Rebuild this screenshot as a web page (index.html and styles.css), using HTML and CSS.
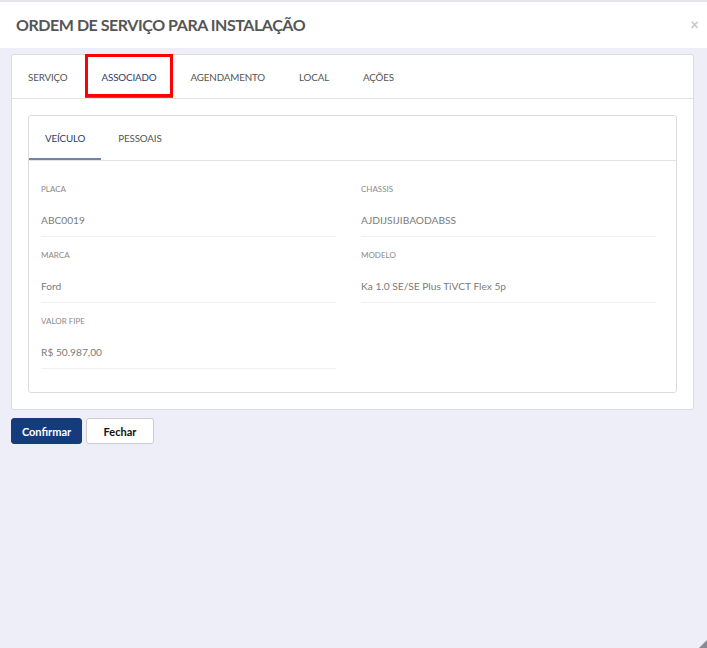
FILE: index.html
```html
<!DOCTYPE html>
<html lang="pt-BR">
<head>
  <meta charset="UTF-8">
  <meta name="viewport" content="width=device-width, initial-scale=1.0">
  <link rel="stylesheet" href="styles.css">
  <title>Ordem de Serviço</title>
</head>
<body>
  <header class="modal-header">
    <h1>ORDEM DE SERVIÇO PARA INSTALAÇÃO</h1>
    <span class="close">&times;</span>
  </header>

  <main class="modal-body">
    <div class="card">
      <div class="tabs">
        <a href="#servico" class="tab first">SERVIÇO</a>
        <a href="#associado" class="tab active marked">ASSOCIADO</a>
        <a href="#agendamento" class="tab">AGENDAMENTO</a>
        <a href="#local" class="tab">LOCAL</a>
        <a href="#acoes" class="tab">AÇÕES</a>
      </div>

      <div class="card-body">
        <div class="inner-card">
          <div class="tabs inner">
            <a href="#veiculo" class="tab first active">VEÍCULO</a>
            <a href="#pessoais" class="tab">PESSOAIS</a>
          </div>

          <div class="fields">
            <div class="field">
              <label>PLACA</label>
              <div class="value">ABC0019</div>
            </div>
            <div class="field">
              <label>CHASSIS</label>
              <div class="value">AJDIJSIJIBAODABSS</div>
            </div>
            <div class="field">
              <label>MARCA</label>
              <div class="value">Ford</div>
            </div>
            <div class="field">
              <label>MODELO</label>
              <div class="value">Ka 1.0 SE/SE Plus TiVCT Flex 5p</div>
            </div>
            <div class="field">
              <label>VALOR FIPE</label>
              <div class="value">R$ 50.987,00</div>
            </div>
          </div>
        </div>
      </div>
    </div>

    <div class="actions">
      <button class="btn primary">Confirmar</button>
      <button class="btn">Fechar</button>
    </div>
  </main>

  <svg class="resize" width="8" height="8" viewBox="0 0 8 8">
    <path d="M8 0 L8 8 L0 8 Z" fill="#8a8a95"/>
  </svg>
</body>
</html>
```

FILE: styles.css
```css
* {
  margin: 0;
  padding: 0;
  box-sizing: border-box;
  text-decoration: none;
}

html, body {
  height: 100%;
}

body {
  background-color: #eeeef8;
  font-family: Lato, "Noto Sans", sans-serif;
  color: #555;
  position: relative;
}

.modal-header {
  display: flex;
  justify-content: space-between;
  align-items: center;
  height: 48px;
  background-color: #fff;
  border-top: 2px solid #e6e6ea;
  padding: 0 8px 2px 16px;
}

.modal-header h1 {
  font-size: 16px;
  font-weight: bold;
  color: #555;
  letter-spacing: -0.45px;
}

.close {
  font-size: 15px;
  color: #c8c8c8;
  font-weight: bold;
}

.modal-body {
  padding: 6px 13px 0 11px;
}

.card {
  background-color: #fff;
  border: 1px solid #dcdcdc;
  border-radius: 3px;
}

.tabs {
  display: flex;
  height: 44px;
  border-bottom: 1px solid #e3e3e3;
}

.tab {
  display: flex;
  align-items: center;
  padding: 0 17px;
  font-size: 9.8px;
  letter-spacing: -0.15px;
  color: #555;
  position: relative;
}

.tabs:not(.inner) .tab.first {
  padding-left: 16px;
}

.tab.active {
  color: #2c3d6b;
  box-shadow: inset 0 -2px 0 #4d6ba8;
}

.tab.marked::after {
  content: "";
  position: absolute;
  left: 0;
  top: -1px;
  right: 0;
  bottom: 1px;
  border: 3px solid #ff0000;
}

.card-body {
  padding: 16px;
}

.inner-card {
  border: 1px solid #dcdcdc;
  border-radius: 3px;
}

.tabs.inner {
  height: 45px;
}

.tabs.inner .tab {
  padding: 0 16px;
}

.tabs.inner .tab + .tab {
  padding-left: 17px;
}

.tabs.inner .tab.active {
  box-shadow: inset 0 -2px 0 #7183a6;
}

.fields {
  display: grid;
  grid-template-columns: 1fr 1fr;
  column-gap: 25px;
  row-gap: 12px;
  padding: 22px 20px 23px 12px;
}

.field {
  border-bottom: 1px solid #f0f0f0;
  padding-bottom: 8px;
}

.field label {
  display: block;
  font-size: 8px;
  line-height: 12px;
  color: #8a8a8a;
  margin-bottom: 17px;
}

.field .value {
  font-size: 10.2px;
  line-height: 16px;
  color: #7b7b7b;
}

.actions {
  display: flex;
  gap: 4px;
  margin-top: 8px;
}

.btn {
  height: 26px;
  padding: 0 16px;
  font-family: Lato, "Noto Sans", sans-serif;
  font-size: 11px;
  font-weight: bold;
  border: 1px solid #ccc;
  border-radius: 3px;
  background-color: #fff;
  color: #111;
  width: 68px;
}

.btn.primary {
  background-color: #143c7c;
  border-color: #143c7c;
  color: #fff;
  width: 71px;
  padding: 0;
}

.resize {
  position: absolute;
  right: 0;
  bottom: 0;
}
```
